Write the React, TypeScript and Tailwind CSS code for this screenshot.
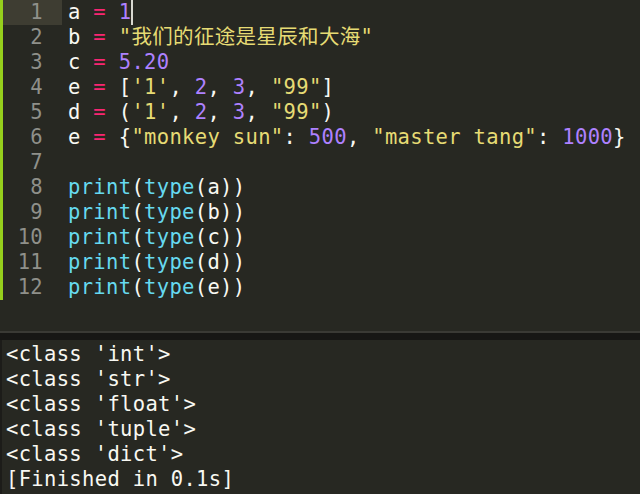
import React from "react";

const P = "text-[#f92672]";
const N = "text-[#ae81ff]";
const S = "text-[#e6db74]";
const F = "text-[#66d9ef]";
const W = "text-[#f8f8f2]";

type Seg = [string, string];

const lines: Seg[][] = [
  [[W, "a "], [P, "="], [W, " "], [N, "1"]],
  [[W, "b "], [P, "="], [W, " "], [S, "\"我们的征途是星辰和大海\""]],
  [[W, "c "], [P, "="], [W, " "], [N, "5.20"]],
  [[W, "e "], [P, "="], [W, " ["], [S, "'1'"], [W, ", "], [N, "2"], [W, ", "], [N, "3"], [W, ", "], [S, "\"99\""], [W, "]"]],
  [[W, "d "], [P, "="], [W, " ("], [S, "'1'"], [W, ", "], [N, "2"], [W, ", "], [N, "3"], [W, ", "], [S, "\"99\""], [W, ")"]],
  [[W, "e "], [P, "="], [W, " {"], [S, "\"monkey sun\""], [W, ": "], [N, "500"], [W, ", "], [S, "\"master tang\""], [W, ": "], [N, "1000"], [W, "}"]],
  [],
  [[F, "print"], [W, "("], [F, "type"], [W, "(a))"]],
  [[F, "print"], [W, "("], [F, "type"], [W, "(b))"]],
  [[F, "print"], [W, "("], [F, "type"], [W, "(c))"]],
  [[F, "print"], [W, "("], [F, "type"], [W, "(d))"]],
  [[F, "print"], [W, "("], [F, "type"], [W, "(e))"]],
];

const output = [
  "<class 'int'>",
  "<class 'str'>",
  "<class 'float'>",
  "<class 'tuple'>",
  "<class 'dict'>",
  "[Finished in 0.1s]",
];

const font = {
  fontFamily: '"DejaVu Sans Mono", "Noto Sans CJK SC", monospace',
};

export default function App() {
  return (
    <div
      className="w-[640px] h-[494px] bg-[#272822] flex flex-col overflow-hidden text-[20.5px] leading-[25px] tracking-[0.33px]"
      style={font}
    >
      <div className="h-[331px] flex flex-col">
        <div className="border-l-[3px] border-[#95cf1c] flex flex-col">
          {lines.map((segs, i) => (
            <div key={i} className="h-[25px] flex whitespace-pre">
              <div
                className={`w-[59px] shrink-0 text-right pr-[19px] text-[#8f908a] ${
                  i === 0 ? "bg-[#3e3d32]" : ""
                }`}
              >
                {i + 1}
              </div>
              <div className="pl-[6px] flex relative">
                {segs.map(([c, t], j) => (
                  <span key={j} className={c}>
                    {t}
                  </span>
                ))}
                {i === 0 && (
                  <span className="w-[2px] h-[25px] bg-[#d8d8d0]" />
                )}
              </div>
            </div>
          ))}
        </div>
      </div>
      <div className="h-[2px] bg-[#3a3a35]" />
      <div className="h-[7px] bg-[#171715]" />
      <div className="flex-1 border-l-[2px] border-[#1c1c19] pl-[4px] pt-[2px] text-[#f8f8f2] whitespace-pre">
        {output.map((o, i) => (
          <div key={i} className="h-[25px]">
            {o}
          </div>
        ))}
      </div>
    </div>
  );
}
